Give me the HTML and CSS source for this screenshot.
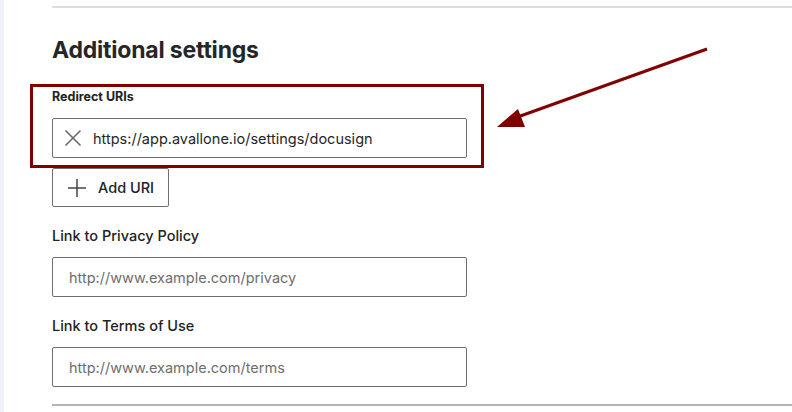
FILE: index.html
```html
<!DOCTYPE html>
<html lang="en">

<head>
    <meta charset="UTF-8">
    <meta name="viewport" content="width=device-width, initial-scale=1.0">
    <title>Additional settings</title>
    <link rel="stylesheet" href="styles.css">
</head>

<body>
    <div class="side"></div>
    <main class="page">
        <hr class="rule-top">
        <h1>Additional settings</h1>

        <div class="group">
            <label class="label-strong" for="redirect">Redirect URIs</label>
            <div class="field">
                <button class="clear" type="button" aria-label="Remove">
                    <svg width="18" height="18" viewBox="0 0 18 18">
                        <path d="M1.5 1.5 L16.5 16.5 M16.5 1.5 L1.5 16.5" stroke="#666" stroke-width="1.5" fill="none" />
                    </svg>
                </button>
                <input id="redirect" type="text" value="https://app.avallone.io/settings/docusign">
            </div>
            <button class="add" type="button">
                <svg width="18" height="18" viewBox="0 0 18 18">
                    <path d="M9 0 V18 M0 9 H18" stroke="#444" stroke-width="1.5" fill="none" />
                </svg>
                <span>Add URI</span>
            </button>
        </div>

        <div class="group">
            <label for="privacy">Link to Privacy Policy</label>
            <input class="plain" id="privacy" type="text" placeholder="http://www.example.com/privacy">
        </div>

        <div class="group">
            <label for="terms">Link to Terms of Use</label>
            <input class="plain" id="terms" type="text" placeholder="http://www.example.com/terms">
        </div>

        <hr class="rule-bottom">

        <!-- annotation drawn over the form -->
        <div class="mark"></div>
        <svg class="arrow" width="240" height="100" viewBox="0 0 240 100">
            <line x1="225" y1="8" x2="30" y2="78" stroke="#800000" stroke-width="3" />
            <polygon points="15,86 36,68 43,86" fill="#800000" />
        </svg>
    </main>
</body>

</html>
```

FILE: styles.css
```css
* {
    box-sizing: border-box;
    margin: 0;
    padding: 0;
}

body {
    display: flex;
    height: 412px;
    overflow: hidden;
    background: #fff;
    font-family: 'Inter', 'Noto Sans', sans-serif;
    color: #1e1e1e;
}

.side {
    width: 4px;
    background: #eef2f6;
    flex-shrink: 0;
}

.page {
    position: relative;
    flex: 1;
    padding-left: 48px;
}

.rule-top {
    border: none;
    border-top: 2px solid #dcdcdc;
    margin-top: 6px;
}

h1 {
    font-size: 23px;
    font-weight: 700;
    line-height: 28px;
    letter-spacing: -0.2px;
    color: #262626;
    margin-top: 28px;
}

.group {
    display: flex;
    flex-direction: column;
    align-items: flex-start;
    margin-top: 24px;
}

.group + .group {
    margin-top: 20px;
}

label {
    font-size: 14.5px;
    font-weight: 500;
    line-height: 18px;
    color: #222;
    margin-bottom: 12px;
}

.label-strong {
    font-size: 12.5px;
    font-weight: 700;
    margin-bottom: 12px;
}

.field,
.plain {
    width: 415px;
    height: 40px;
    border: 1px solid #6e6e6e;
    border-radius: 2px;
    background: #fff;
}

.field {
    display: flex;
    align-items: center;
    padding-left: 11px;
}

.clear {
    border: none;
    background: none;
    display: flex;
    margin-right: 11px;
}

input {
    font-family: 'Inter', 'Noto Sans', sans-serif;
    font-size: 14.5px;
    color: #262626;
    border: none;
    outline: none;
    background: transparent;
}

.field input {
    flex: 1;
}

.plain {
    padding: 0 16px;
}

.plain::placeholder {
    color: #6e6e6e;
}

.add {
    display: flex;
    align-items: center;
    gap: 12px;
    width: 117px;
    height: 39px;
    margin-top: 10px;
    padding-left: 15px;
    border: 1px solid #6e6e6e;
    border-radius: 2px;
    background: #fff;
    font-family: 'Inter', 'Noto Sans', sans-serif;
    font-size: 14.5px;
    font-weight: 500;
    color: #222;
}

.rule-bottom {
    border: none;
    border-top: 2px solid #b4b4b4;
    margin-top: 17px;
}

.mark {
    position: absolute;
    left: 26px;
    top: 84px;
    width: 454px;
    height: 84px;
    border: 3px solid #800000;
}

.arrow {
    position: absolute;
    left: 478px;
    top: 41px;
}
```
